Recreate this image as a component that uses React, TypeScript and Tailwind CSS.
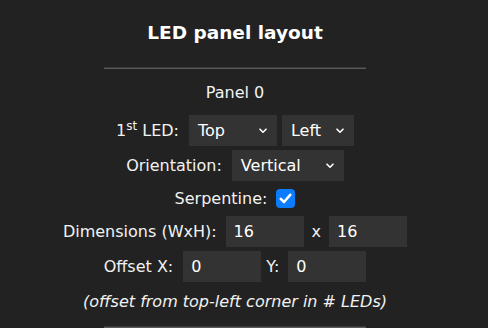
import React from "react";

function Chevron() {
  return (
    <svg width="8" height="6" viewBox="0 0 8 6" className="shrink-0">
      <path d="M1 1.2 L4 4.2 L7 1.2" fill="none" stroke="#ffffff" strokeWidth="1.6" strokeLinecap="round" strokeLinejoin="round" />
    </svg>
  );
}

function Select({ value, w }: { value: string; w: string }) {
  return (
    <div className={`${w} h-[31px] bg-[#333333] flex items-center justify-between pl-[9px] pr-[10px] text-white`}>
      <span>{value}</span>
      <Chevron />
    </div>
  );
}

function Input({ value }: { value: string }) {
  return (
    <div className="w-[78px] h-[31px] bg-[#333333] flex items-center pl-[8px] text-white">{value}</div>
  );
}

export default function App() {
  return (
    <div className="w-full h-[328px] bg-[#222222] overflow-hidden">
      <div
        className="w-[470px] h-[328px] text-[#f2f2f2] flex flex-col items-center"
        style={{ fontFamily: "'DejaVu Sans', Verdana, sans-serif", fontSize: "16px" }}
      >
        <div className="h-[66px] w-full flex items-center justify-center">
          <h3 className="text-[18.5px] font-bold text-white leading-none">LED panel layout</h3>
        </div>
        <div className="w-[262px] h-[2px] border-t border-t-[#3a3a3a] border-b border-b-[#5a5a5a] mt-[1px]" />
        <div className="h-[24px] mt-[12px] flex items-center justify-center leading-none">Panel 0</div>
        <div className="h-[35px] mt-[8px] flex items-center justify-center">
          <span className="mr-[10px]">
            1<sup className="text-[12px]">st</sup> LED:
          </span>
          <Select value="Top" w="w-[88px]" />
          <div className="w-[5px]" />
          <Select value="Left" w="w-[72px]" />
        </div>
        <div className="h-[35px] flex items-center justify-center">
          <span className="mr-[10px]">Orientation:</span>
          <Select value="Vertical" w="w-[112px]" />
        </div>
        <div className="h-[31px] flex items-center justify-center">
          <span className="mr-[9px]">Serpentine:</span>
          <span className="w-[19px] h-[19px] rounded-[4px] bg-[#0b7cfc] flex items-center justify-center">
            <svg width="13" height="11" viewBox="0 0 13 11">
              <path d="M1.8 5.8 L5 9 L11.2 1.8" fill="none" stroke="#ffffff" strokeWidth="2.6" strokeLinecap="round" strokeLinejoin="round" />
            </svg>
          </span>
        </div>
        <div className="h-[35px] flex items-center justify-center">
          <span className="mr-[9px]">Dimensions (WxH):</span>
          <Input value="16" />
          <span className="mx-[8px]">x</span>
          <Input value="16" />
        </div>
        <div className="h-[35px] flex items-center justify-center">
          <span className="mr-[10px]">Offset X:</span>
          <Input value="0" />
          <span className="ml-[5px] mr-[9px]">Y:</span>
          <Input value="0" />
        </div>
        <div className="h-[36px] flex items-center justify-center italic">(offset from top-left corner in # LEDs)</div>
        <div className="w-[262px] h-[2px] border-t border-t-[#3a3a3a] border-b border-b-[#5a5a5a] mt-[6px]" />
      </div>
    </div>
  );
}
